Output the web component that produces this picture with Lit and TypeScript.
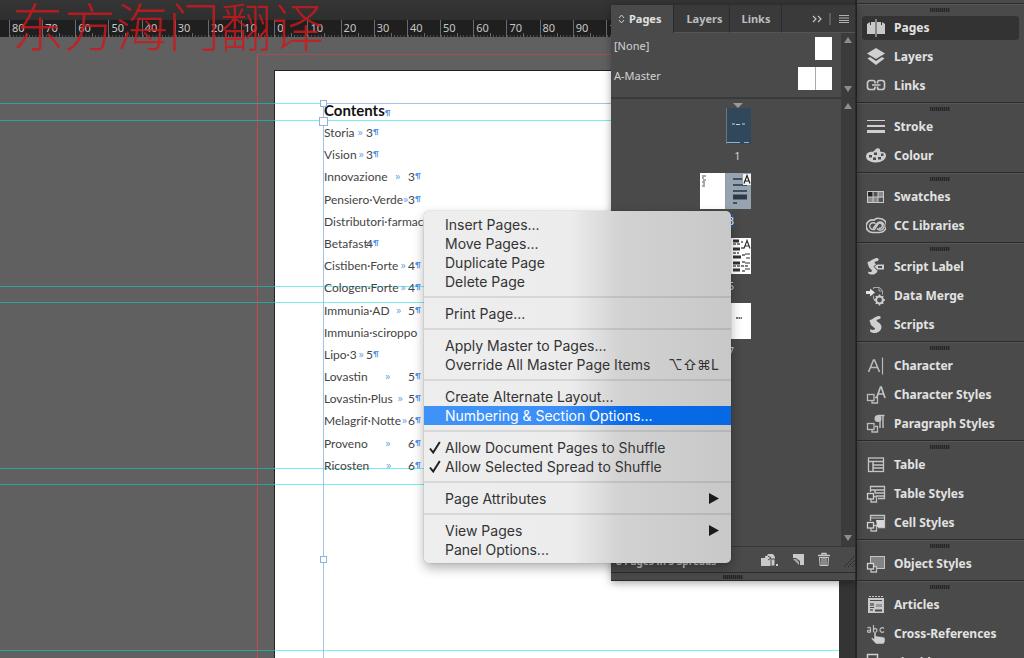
import { LitElement, html, css } from "lit";
import { customElement, property } from "lit/decorators.js";
import { classMap } from "lit/directives/class-map.js";

/* ---------- icons ---------- */

const icons: Record<string, unknown> = {
  pages: html`<svg viewBox="0 0 20 20"><path d="M1 16V6l3-2v3h1V4h4v12zM11 16V4h4v3h1V4l3 2v10z" fill="#c9c9c9"/><path d="M10 1v18" stroke="#d6d6d6"/></svg>`,
  layers: html`<svg viewBox="0 0 20 20"><path d="M10 1l9 5.500-9 5.500-9-5.500z" fill="#d0d0d0"/><path d="M1.500 11.500L4 10l6 4 6-4 2.500 1.500L10 18z" fill="#d0d0d0"/></svg>`,
  links: html`<svg viewBox="0 0 20 20"><path d="M9 7.500V6.500a2 2 0 0 0-2-2H4a2.500 2.500 0 0 0-2.500 2.500v4A2.500 2.500 0 0 0 4 13.500h3a2 2 0 0 0 2-2v-1M11.500 7.500V6.500a2 2 0 0 1 2-2H16a2.500 2.500 0 0 1 2.500 2.500v4a2.500 2.500 0 0 1-2.500 2.500h-2.500a2 2 0 0 1-2-2v-1M6 9h8.500" fill="none" stroke="#c9c9c9" stroke-width="1.700"/></svg>`,
  stroke: html`<svg viewBox="0 0 20 20"><path d="M1 3.500h18" stroke="#cfcfcf"/><path d="M1 9h18" stroke="#cfcfcf" stroke-width="2"/><path d="M1 14.500h18" stroke="#cfcfcf" stroke-width="3"/></svg>`,
  colour: html`<svg viewBox="0 0 20 20"><path d="M9 4c1.500-2.600 5.500-2 5 .3-.2 1.200.6 1.700 2 1.700 2.200 0 4 1 4 3.500 0 4-4.500 7-10 7s-10-2.500-10-6c0-2.200 1.500-4 4-4.500C6 5.700 7.500 6 9 4z" fill="#cfcfcf"/><g fill="#4a4a4a"><rect x="3" y="9" width="3" height="2.500"/><rect x="7" y="11.500" width="3" height="2.500"/><rect x="12" y="11" width="3" height="2.500"/><rect x="15" y="7.500" width="2.500" height="2.500"/><rect x="8" y="6.500" width="3" height="2.500"/></g></svg>`,
  swatches: html`<svg viewBox="0 0 20 20"><rect x="1.500" y="4.500" width="16" height="11" fill="#8a8a8a" stroke="#c9c9c9"/><path d="M2 5h5v5H2z" fill="#222"/><path d="M7 5h5v5H7zM12 10.500h5V15h-5z" fill="#555"/><path d="M7 4v12M12 4v12M1 10h17" stroke="#c9c9c9"/></svg>`,
  cc: html`<svg viewBox="0 0 20 20"><path d="M7 16.500a6.300 6.300 0 1 1 1-12.400 5.500 5.500 0 0 1 5.500-1.600A7 7 0 0 1 13.500 16.500z" fill="none" stroke="#c9c9c9" stroke-width="1.600"/><path d="M11 12.500a4 4 0 1 0 0-5L7 12.500M13 12a2.500 2.500 0 1 0-1-4L8.500 13.500H7a3.400 3.400 0 1 1 2.500-5.800" fill="none" stroke="#c9c9c9" stroke-width="1.400"/></svg>`,
  scriptLabel: html`<svg viewBox="0 0 20 20"><path d="M9 1.500c2-1 4.500 0 3.500 1.800C11.800 4.500 9 4 8.500 5.500c0 1.200 2.500 1.500 3 3.500v5c-1 3-4.500 4-7 3.500-2-.3-3-1.500-2-3 1 1 3 .5 3.500-.5.400-1.500-3-2.500-3.500-5C2 7 1 6 2 4.500 3 5.500 5 3 9 1.500z" fill="#cfcfcf"/><path d="M8 9.500l3-2.500h7.500v6H11z" fill="#cfcfcf" stroke="#4a4a4a"/><path d="M12 10h4" stroke="#4a4a4a" stroke-width="2"/></svg>`,
  dataMerge: html`<svg viewBox="0 0 20 20"><path d="M7.500 3V1.500h6l3 3v4M7.500 9.500V13h2M13 2v3h3" fill="none" stroke="#a9a9a9"/><path d="M0 5h4V2.500L9 6.500 4 10.500V8H0z" fill="#e2e2e2"/><circle cx="13.500" cy="14" r="3.400" fill="none" stroke="#cfcfcf" stroke-width="2"/><path d="M13.500 8.500v2M13.500 17.500v2M8 14h2M17 14h2M9.800 10.300l1.200 1.200M16 16.500l1.200 1.200M9.800 17.700l1.200-1.200M16 11.500l1.200-1.200" stroke="#cfcfcf" stroke-width="1.600"/></svg>`,
  scripts: html`<svg viewBox="0 0 20 20"><path d="M11 1.500c2-1 4.500 0 3.500 1.800-.7 1.200-3.500.7-4 2.200 0 1.500 5 2.500 5 6.500 0 4-4.500 6.500-8 6-2.500-.4-4.500-2-3-3.800 1 1 4 1 4.500-.2.500-1.500-4-2.500-4.500-5.500C4.300 7 3 6.200 4 4.800 5 5.600 7 2.800 11 1.500z" fill="#d0d0d0"/></svg>`,
  character: html`<svg viewBox="0 0 20 20"><path d="M2.500 16L7.500 4h1l5 12M4.500 11.500h7" fill="none" stroke="#b9b9b9" stroke-width="1.600"/><path d="M16.500 1.500v17" stroke="#b9b9b9" stroke-width="1.200"/></svg>`,
  charStyles: html`<svg viewBox="0 0 20 20"><path d="M10.500 13L14.500 2h.8L19 13M12 9h6" fill="none" stroke="#c4c4c4" stroke-width="1.700"/><path d="M6 15v3h5.500v-5.500H9" fill="none" stroke="#bdbdbd" stroke-width="1.300"/><rect x="1.500" y="9.500" width="6.500" height="6" fill="none" stroke="#bdbdbd" stroke-width="1.300"/></svg>`,
  paraStyles: html`<svg viewBox="0 0 20 20"><path d="M12 1.500h6.500M14 1.500V14M17 1.500V14" stroke="#c4c4c4" stroke-width="1.400"/><circle cx="12" cy="4.500" r="3.500" fill="#c4c4c4"/><path d="M6 15v3h5.500v-5.500H9" fill="none" stroke="#bdbdbd" stroke-width="1.300"/><rect x="1.500" y="9.500" width="6.500" height="6" fill="none" stroke="#bdbdbd" stroke-width="1.300"/></svg>`,
  table: html`<svg viewBox="0 0 20 20"><rect x="2.500" y="3" width="15" height="13.500" fill="none" stroke="#c4c4c4" stroke-width="1.300"/><path d="M3 6.500h14M7 7v9.500M7 10h10M7 13h10" stroke="#c4c4c4" stroke-width="1.500"/></svg>`,
  tableStyles: html`<svg viewBox="0 0 20 20"><path d="M4.500 8V2.500h14v12H12" fill="none" stroke="#c4c4c4" stroke-width="1.300"/><path d="M5 6h13M9 9h9M10 12h8M9 6v3" stroke="#c4c4c4" stroke-width="1.500"/><path d="M5 15v3h5.500v-5.500H8" fill="none" stroke="#bdbdbd" stroke-width="1.300"/><rect x="1.500" y="9.500" width="6" height="5.500" fill="#4a4a4a" stroke="#d2d2d2" stroke-width="1.300"/></svg>`,
  cellStyles: html`<svg viewBox="0 0 20 20"><path d="M4.500 8V2.500h14v12H12" fill="none" stroke="#c4c4c4" stroke-width="1.300"/><path d="M5 5h13" stroke="#c4c4c4"/><path d="M10 7h8v7h-7z" fill="#d8d8d8"/><path d="M5 15v3h5.500v-5.500H8" fill="none" stroke="#bdbdbd" stroke-width="1.300"/><rect x="1.500" y="9.500" width="6" height="5.500" fill="#4a4a4a" stroke="#d2d2d2" stroke-width="1.300"/></svg>`,
  objectStyles: html`<svg viewBox="0 0 20 20"><rect x="4.500" y="2.500" width="14" height="12" fill="#838383" stroke="#c4c4c4"/><path d="M5 15v3h5.500v-5.500H8" fill="#4a4a4a" stroke="#bdbdbd" stroke-width="1.300"/><rect x="1.500" y="9.500" width="6" height="5.500" fill="#4a4a4a" stroke="#d2d2d2" stroke-width="1.300"/></svg>`,
  articles: html`<svg viewBox="0 0 20 20"><path d="M3 1.500h14" stroke="#c4c4c4" stroke-dasharray="2 1"/><rect x="2" y="3" width="16" height="15" fill="#c9c9c9"/><path d="M4 5.500h12M4 12.500h4" stroke="#4a4a4a" fill="none"/><path d="M10 9h6v3h-6z" fill="#999"/><path d="M9 14.500h7v2H9z" fill="#4a4a4a"/><path d="M4 8h4v3H4zM4 14h3v2H4z" fill="#777"/></svg>`,
  crossRef: html`<svg viewBox="0 0 20 20"><path d="M1.500 4c1-1 3-1 3 .5V8.500M4.500 6C2 6 1.500 6.500 1.500 7.300c0 1.500 2.500 1.500 3 0M7.500 1v7.500M7.500 5.500c1-1.500 3.500-1 3.500 1s-2.500 2.500-3.500 1M18 4.500c-1.500-1.500-4-.7-4 1.500s2.500 3 4 1.500" fill="none" stroke="#bdbdbd" stroke-width="1.200"/><path d="M8 8c1-.5 2 0 2 1v3l7 1c1.500.2 2 1 2 2v2.500L17.500 20H10l-4.500-5c-.5-1 .5-1.700 1.500-1l1 1z" fill="#d0d0d0" stroke="#4a4a4a" stroke-width=".5"/></svg>`,
  liquid: html`<svg viewBox="0 0 20 20"><path d="M9 14.500H1.500V1.500h10V6" fill="none" stroke="#d0d0d0" stroke-width="1.500"/><rect x="5" y="5" width="8" height="8" fill="#888"/><rect x="9" y="7" width="9" height="10" fill="none" stroke="#999"/></svg>`,
};

const dockGroups: [string, string][][] = [
  [["pages", "Pages"], ["layers", "Layers"], ["links", "Links"]],
  [["stroke", "Stroke"], ["colour", "Colour"]],
  [["swatches", "Swatches"], ["cc", "CC Libraries"]],
  [["scriptLabel", "Script Label"], ["dataMerge", "Data Merge"], ["scripts", "Scripts"]],
  [["character", "Character"], ["charStyles", "Character Styles"], ["paraStyles", "Paragraph Styles"]],
  [["table", "Table"], ["tableStyles", "Table Styles"], ["cellStyles", "Cell Styles"]],
  [["objectStyles", "Object Styles"]],
  [["articles", "Articles"], ["crossRef", "Cross-References"], ["liquid", "Liquid Layout"]],
];

/* ---------- dock ---------- */

@customElement("panel-dock")
class PanelDock extends LitElement {
  @property() active = "pages";

  static styles = css`
    :host {
      display: block;
      box-sizing: border-box;
      padding-top: 3px;
      border-left: 2px solid #262626;
      background: #4a4a4a;
      overflow: hidden;
      font-family: "Noto Sans", "Open Sans", sans-serif;
    }
    .group {
      display: grid;
      grid-auto-rows: 28px;
      row-gap: 1px;
      padding: 10px 4px 2px;
      border-top: 1px solid #2b2b2b;
      box-shadow: inset 0 1px #575757;
      background: repeating-linear-gradient(90deg, #262626 0 1px, #3c3c3c 1px 2px) 73px 4px / 20px 4px no-repeat;
    }
    .row {
      display: flex;
      align-items: center;
      gap: 8px;
      margin: 0;
      padding: 0 4px;
      border: 0 solid transparent;
      border-width: 2px 1px;
      border-radius: 5px;
      background: none;
      background-clip: padding-box;
      color: #e2e2e2;
      font: 700 12px/20px "Noto Sans", "Open Sans", sans-serif;
      text-align: left;
      white-space: nowrap;
    }
    .row.on {
      background-color: #333;
    }
    svg {
      flex: none;
      width: 20px;
      height: 20px;
    }
  `;

  render() {
    return dockGroups.map(
      (group) => html`<div class="group">
        ${group.map(
          ([id, label]) => html`<button class=${classMap({ row: true, on: id === this.active })} @click=${() => (this.active = id)}>
            ${icons[id]}<span>${label}</span>
          </button>`
        )}
      </div>`
    );
  }
}

/* ---------- pages panel ---------- */

@customElement("pages-panel")
class PagesPanel extends LitElement {
  static styles = css`
    :host {
      display: flex;
      flex-direction: column;
      box-sizing: border-box;
      border: 1px solid #2a2a2a;
      border-width: 0 1px 1px 0;
      background: #4a4a4a;
      color: #d2d2d2;
      font: 11px/16px "Noto Sans", "Open Sans", sans-serif;
      box-shadow: 0 2px 8px rgba(0, 0, 0, 0.35);
    }
    button {
      margin: 0;
      padding: 0;
      border: 0;
      background: none;
      color: inherit;
      font: inherit;
    }
    .tabs {
      display: flex;
      align-items: stretch;
      height: 28px;
      background: #3a3a3a;
    }
    .tab {
      min-width: 52px;
      padding: 0 6px 0 12px;
      border-right: 1px solid #2c2c2c;
      color: #bdbdbd;
      font-weight: 700;
      text-align: left;
    }
    .tab.on {
      display: flex;
      align-items: center;
      gap: 4px;
      padding: 0 12px 0 7px;
      background: #4a4a4a;
      color: #e2e2e2;
    }
    .tab.on svg {
      width: 7px;
      height: 10px;
    }
    .tools {
      display: flex;
      flex: 1;
      align-items: center;
      justify-content: flex-end;
      gap: 7px;
      padding-right: 6px;
      border-bottom: 1px solid #555;
    }
    .tab:not(.on) {
      border-bottom: 1px solid #555;
    }
    .pane {
      display: grid;
      grid-template-columns: 1fr 14px;
    }
    .masters {
      border-bottom: 2px solid #3a3a3a;
    }
    .master {
      display: flex;
      align-items: flex-start;
      justify-content: space-between;
      height: 23px;
      margin-top: 7px;
      padding: 0 9px 0 3px;
      line-height: 18px;
    }
    .master:first-child {
      margin-top: 4px;
    }
    .master:last-child {
      margin-bottom: 7px;
    }
    .sheets {
      display: flex;
    }
    .sheet {
      width: 17px;
      height: 23px;
      background: #fff;
    }
    .sheet + .sheet {
      box-shadow: inset 1px 0 #aaa;
    }
    .scroll {
      display: flex;
      flex-direction: column;
      justify-content: space-between;
      align-items: center;
      padding: 4px 0 5px;
      background: #3b3b3b;
    }
    .scroll svg {
      width: 8px;
      height: 6px;
    }
    .spreads {
      flex: 1;
      min-height: 0;
    }
    .list {
      display: flex;
      flex-direction: column;
      padding-top: 4px;
    }
    .marker {
      align-self: center;
      width: 10px;
      height: 5px;
      margin-left: 24px;
    }
    .spread {
      display: grid;
      grid-template: 36px 29px / 1fr 1fr;
    }
    .thumb {
      width: 25px;
      height: 36px;
    }
    .thumb.left {
      justify-self: end;
      border-right: 1px solid #999;
      background: #fff;
    }
    .thumb.right {
      grid-column: 2;
    }
    .num {
      grid-column: 1 / 3;
      justify-self: center;
      align-self: start;
      margin-top: 5px;
      line-height: 14px;
    }
    .num.single {
      grid-column: 2;
      justify-self: start;
      width: 23px;
      text-align: center;
    }
    .num.sel {
      background: #30598c;
      color: #fff;
    }
    .foot {
      display: flex;
      align-items: center;
      gap: 14px;
      height: 25px;
      padding-left: 5px;
      border-top: 1px solid #383838;
      font-weight: 700;
    }
    .count {
      flex: 1;
      padding-top: 3px;
      color: #c4c4c4;
      font-size: 10px;
      white-space: nowrap;
    }
    .foot svg {
      display: block;
      height: 15px;
    }
    .grip {
      height: 7px;
      border-top: 1px solid #2c2c2c;
      background: repeating-linear-gradient(90deg, #222 0 1px, #3c3c3c 1px 2px) center / 20px 4px no-repeat;
    }
  `;

  private scroll() {
    return html`<div class="scroll">
      <svg viewBox="0 0 8 6"><path d="M4 0l4 6H0z" fill="#8d8d8d"/></svg>
      <svg viewBox="0 0 8 6"><path d="M4 6l4-6H0z" fill="#8d8d8d"/></svg>
    </div>`;
  }

  render() {
    return html`
      <div class="tabs">
        <button class="tab on">
          <svg viewBox="0 0 7 10"><path d="M1 4l2.500-3L6 4M1 6l2.500 3L6 6" fill="none" stroke="#ccc"/></svg>Pages
        </button>
        <button class="tab">Layers</button>
        <button class="tab">Links</button>
        <div class="tools">
          <svg width="10" height="8" viewBox="0 0 10 8"><path d="M1 1l3 3-3 3M6 1l3 3-3 3" fill="none" stroke="#c4c4c4" stroke-width="1.200"/></svg>
          <svg width="3" height="12" viewBox="0 0 3 12"><rect width="2" height="12" fill="#5c5c5c"/></svg>
          <svg width="10" height="8" viewBox="0 0 10 8"><path d="M0 .5h10M0 3h10M0 5.500h10M0 7.500h10" stroke="#b0b0b0"/></svg>
        </div>
      </div>
      <div class="pane masters">
        <div>
          <div class="master"><span>[None]</span><span class="sheets"><i class="sheet"></i></span></div>
          <div class="master"><span>A-Master</span><span class="sheets"><i class="sheet"></i><i class="sheet"></i></span></div>
        </div>
        ${this.scroll()}
      </div>
      <div class="pane spreads">
        <div class="list">
          <svg class="marker" viewBox="0 0 10 5"><path d="M0 0h10L5 5z" fill="#999"/></svg>
          <div class="spread">
            <svg class="thumb right" viewBox="0 0 25 36"><rect width="25" height="36" fill="#30475c"/><path d="M0 0v36" stroke="#9aa" stroke-width="1"/><path d="M6 16h3M10 16.500h4M16 16h3" stroke="#c6d2da"/><path d="M1 34.500h13M18 34.500h5" stroke="#9db0bf"/></svg>
            <span class="num single">1</span>
          </div>
          <div class="spread">
            <svg class="thumb left" viewBox="0 0 25 36"><path d="M2 3h4M2 5h2M3 7h3M2 9h3M3 11h2M2 13h3" stroke="#555" stroke-width="1.200"/></svg>
            <svg class="thumb right" viewBox="0 0 25 36"><rect width="25" height="36" fill="#98a3b0"/><path d="M7 6h9M7 12h14M7 18h14M7 30h4" stroke="#3f5062" stroke-width="2"/><path d="M7 24h14" stroke="#2e3a4c" stroke-width="5"/><rect x="17" y="1" width="8" height="11" fill="#f4f4f4"/><path d="M18 10.500l3-8 3 8M19 8h4" fill="none" stroke="#222" stroke-width="1.200"/></svg>
            <span class="num sel">2-3</span>
          </div>
          <div class="spread">
            <svg class="thumb left" viewBox="0 0 25 36"></svg>
            <svg class="thumb right" viewBox="0 0 25 36"><rect width="25" height="36" fill="#fff"/><path d="M7 3h6M7 11h7M7 19h8M7 25h7M7 32h7" stroke="#333" stroke-width="3"/><path d="M7 6h8M15 4h2M15 10h3M7 15h6M16 17h3M7 28h15M16 24h3M16 33h3" stroke="#555" stroke-width="1.500" stroke-dasharray="3 1"/><path d="M18 10.500l3-8 3 8M19 8h4M19 16h5M20 20h4M19 25h5M19 31h5" fill="none" stroke="#333" stroke-width="1.200"/></svg>
            <span class="num">4-5</span>
          </div>
          <div class="spread">
            <svg class="thumb left" viewBox="0 0 25 36"></svg>
            <svg class="thumb right" viewBox="0 0 25 36"><rect width="25" height="36" fill="#fff"/><path d="M4 15h6" stroke="#777" stroke-width="2" stroke-dasharray="2 .5" transform="translate(6 0)"/></svg>
            <span class="num">6-7</span>
          </div>
        </div>
        ${this.scroll()}
      </div>
      <div class="foot">
        <span class="count">8 Pages in 5 Spreads</span>
        <button aria-label="Edit page size"><svg width="17" viewBox="0 0 17 15"><path d="M0 6h4V4h2l1-2h5l2 3v2h-4v7H0z" fill="#c9c9c9"/><path d="M7 4l3 2-3 2M10 7h4v7h-4z" stroke="#4a4a4a" fill="#c9c9c9"/><path d="M15 12h2v2h-2z" fill="#c9c9c9"/></svg></button>
        <button aria-label="New page"><svg width="12" viewBox="0 0 12 15"><path d="M1 2h11v11H8V9L4 6H1z" fill="#c9c9c9"/><path d="M1 7l3 0 3 3v3z" fill="#aaa"/></svg></button>
        <button aria-label="Delete page"><svg width="12" viewBox="0 0 12 15"><path d="M0 3.500h12M4 3V1.500h4V3" fill="none" stroke="#c9c9c9" stroke-width="1.300"/><path d="M1.500 5.500h9l-.5 8H2z" fill="none" stroke="#c9c9c9"/><path d="M4 6v7M6 6v7M8 6v7" stroke="#c9c9c9"/></svg></button>
        <svg width="11" viewBox="0 0 11 15"><path d="M0 15L11 4M4 15l7-7M8 15l3-3" stroke="#222" stroke-dasharray="1.500 1"/></svg>
      </div>
      <div class="grip"></div>
    `;
  }
}

/* ---------- context menu ---------- */

interface Entry {
  label: string;
  keys?: string;
  checked?: boolean;
  sub?: boolean;
  hot?: boolean;
}

const menu: Entry[][] = [
  [{ label: "Insert Pages..." }, { label: "Move Pages..." }, { label: "Duplicate Page" }, { label: "Delete Page" }],
  [{ label: "Print Page..." }],
  [{ label: "Apply Master to Pages..." }, { label: "Override All Master Page Items", keys: "⌥⇧⌘L" }],
  [{ label: "Create Alternate Layout..." }, { label: "Numbering & Section Options...", hot: true }],
  [{ label: "Allow Document Pages to Shuffle", checked: true }, { label: "Allow Selected Spread to Shuffle", checked: true }],
  [{ label: "Page Attributes", sub: true }],
  [{ label: "View Pages", sub: true }, { label: "Panel Options..." }],
];

@customElement("context-menu")
class ContextMenu extends LitElement {
  static styles = css`
    :host {
      display: block;
      box-sizing: border-box;
      padding: 4px 0;
      border-radius: 5px;
      background: linear-gradient(90deg, #eee 0, #ececec 48%, #d2d2d2 64%, #c8c8c8 100%);
      box-shadow: 0 0 1px rgba(0, 0, 0, 0.5), 0 5px 12px rgba(0, 0, 0, 0.3);
    }
    .part + .part {
      margin-top: 5px;
      padding-top: 6px;
      border-top: 2px solid rgba(0, 0, 0, 0.09);
    }
    .item {
      display: grid;
      grid-template-columns: 21px 1fr auto;
      align-items: center;
      width: 100%;
      height: 19px;
      margin: 0;
      padding: 0 12px 0 0;
      border: 0;
      background: none;
      color: #333;
      font: 14px/19px Inter, Roboto, sans-serif;
      text-align: left;
      white-space: nowrap;
    }
    .item.hot {
      background: linear-gradient(90deg, #3f93f8 0, #3c8ff6 45%, #0a6be8 65%, #0768e4 100%);
      color: #fff;
    }
    .tick {
      justify-self: center;
      width: 12px;
      height: 13px;
    }
    .keys {
      font-family: Inter, "DejaVu Sans", sans-serif;
    }
    .sub {
      width: 10px;
      height: 11px;
    }
  `;

  render() {
    return menu.map(
      (part) => html`<div class="part">
        ${part.map(
          (e) => html`<button class=${classMap({ item: true, hot: !!e.hot })}>
            ${e.checked
              ? html`<svg class="tick" viewBox="0 0 12 13"><path d="M1 7.500l3.200 4L10.800 1" fill="none" stroke="#222" stroke-width="2"/></svg>`
              : html`<span></span>`}
            <span>${e.label}</span>
            ${e.keys ? html`<span class="keys">${e.keys}</span>` : ""}
            ${e.sub ? html`<svg class="sub" viewBox="0 0 10 11"><path d="M0 0l10 5.500L0 11z" fill="#1a1a1a"/></svg>` : ""}
          </button>`
        )}
      </div>`
    );
  }
}

/* ---------- workspace ---------- */

/* name, page number, number of tab stops before it */
const contents: [string, string, number][] = [
  ["Storia", "3", 1],
  ["Vision", "3", 1],
  ["Innovazione", "3", 2],
  ["Pensiero·Verde", "3", 2],
  ["Distributori·farmace", "", 0],
  ["Betafast", "4", 1],
  ["Cistiben·Forte", "4", 2],
  ["Cologen·Forte", "4", 2],
  ["Immunia·AD", "5", 2],
  ["Immunia·sciroppo", "", 0],
  ["Lipo·3", "5", 1],
  ["Lovastin", "5", 2],
  ["Lovastin·Plus", "5", 2],
  ["Melagrif·Notte", "6", 2],
  ["Proveno", "6", 2],
  ["Ricosten", "6", 2],
];

const rulerMarks = Array.from({ length: 25 }, (_, i) => Math.abs(i - 8) * 10);
const guides = [66, 83, 249, 265, 431, 447, 613];

@customElement("app-root")
class AppRoot extends LitElement {
  static styles = css`
    :host {
      position: relative;
      display: grid;
      grid-template-columns: 1fr 169px;
      height: 100vh;
      overflow: hidden;
      background: #343434;
      font-family: "Open Sans", "Noto Sans", sans-serif;
    }
    .work {
      display: grid;
      grid-template-rows: 20px 17px 1fr;
      min-width: 0;
      min-height: 0;
    }
    .bar {
      background: linear-gradient(#353535, #2f2f2f);
    }
    .ruler {
      overflow: hidden;
      background: #1f1f1f;
    }
    .marks {
      display: grid;
      grid-template-columns: repeat(25, 1fr);
      width: 829px;
      height: 17px;
      margin-left: 9px;
    }
    .mark {
      padding-left: 2px;
      border-left: 1px solid #6a6a6a;
      background:
        linear-gradient(90deg, transparent 50%, #6a6a6a 50%, #6a6a6a 53%, transparent 53%) bottom / 100% 4px no-repeat,
        linear-gradient(90deg, #5a5a5a 1px, transparent 1px) bottom left / 10% 2px repeat-x;
      color: #c6c6c6;
      font: 11px/16px "Noto Sans", sans-serif;
    }
    .canvas {
      position: relative;
      overflow: hidden;
      margin-right: 16px;
      background: #606060;
    }
    .bleed {
      position: absolute;
      left: 257px;
      top: 17px;
      right: -20px;
      bottom: -20px;
      border: 1px solid #a04f54;
      border-left-color: #c9474c;
    }
    .page {
      position: absolute;
      left: 274px;
      top: 33px;
      right: 0;
      bottom: 0;
      border: 1px solid #222;
      border-width: 1px 0 0 1px;
      background: #fff;
    }
    .guide {
      position: absolute;
      left: 0;
      right: 0;
      height: 1px;
      background: linear-gradient(90deg, #2aa597 275px, #79eeee 275px);
    }
    .frame {
      position: absolute;
      left: 323px;
      top: 66px;
      right: 0;
      bottom: 0;
      border: 1px solid #a0c4ea;
      border-width: 1px 0 0 1px;
      color: #444;
    }
    .handle {
      position: absolute;
      left: -4px;
      width: 5px;
      height: 5px;
      border: 1px solid #8fb2e2;
      background: #fff;
    }
    .handle.top {
      top: -4px;
    }
    .handle.port {
      top: 13px;
      left: -5px;
      width: 7px;
      height: 7px;
    }
    .handle.mid {
      top: 452px;
    }
    h1 {
      height: 18px;
      margin: 0;
      color: #111;
      font: 700 15px/13px Lato, "Open Sans", sans-serif;
    }
    ol {
      display: grid;
      grid-auto-rows: 1fr;
      height: 355px;
      margin: 0;
      padding: 0;
      list-style: none;
      font: 400 12px/21px Lato, "Open Sans", sans-serif;
    }
    li {
      display: flex;
      white-space: nowrap;
    }
    .lead {
      display: flex;
    }
    .lead.t1 {
      width: 42px;
    }
    .lead.t2 {
      width: 84px;
    }
    .tab {
      flex: 1;
      color: #6aa3ea;
      font-family: "Open Sans", sans-serif;
      font-size: 10px;
      text-align: center;
    }
    .sign {
      color: #4f93ea;
      font-weight: 700;
      font-size: 8px;
    }
    .stamp {
      position: absolute;
      left: 12px;
      top: 0;
      margin: 0;
      color: rgba(205, 24, 28, 0.82);
      font: 300 52px/50px "Noto Sans CJK SC", sans-serif;
      white-space: nowrap;
      pointer-events: none;
    }
    pages-panel {
      position: absolute;
      top: 5px;
      right: 168px;
      width: 245px;
      height: 576px;
    }
    context-menu {
      position: absolute;
      left: 424px;
      top: 211px;
      width: 307px;
    }
  `;

  render() {
    return html`
      <main class="work">
        <div class="bar"></div>
        <div class="ruler"><div class="marks">${rulerMarks.map((m) => html`<span class="mark">${m}</span>`)}</div></div>
        <div class="canvas">
          <div class="bleed"></div>
          <div class="page"></div>
          ${guides.map((y) => html`<div class="guide" style="top:${y}px"></div>`)}
          <section class="frame">
            <h1>Contents<span class="sign">¶</span></h1>
            <ol>
              ${contents.map(
                ([name, num, stops]) => html`<li>
                  <span class="lead t${stops}"><span>${name}</span>${stops ? html`<span class="tab">»</span>` : ""}</span>
                  ${num ? html`<span>${num}</span><span class="sign">¶</span>` : ""}
                </li>`
              )}
            </ol>
            <i class="handle top"></i><i class="handle port"></i><i class="handle mid"></i>
          </section>
        </div>
      </main>
      <panel-dock></panel-dock>
      <p class="stamp">东方海门翻译</p>
      <pages-panel></pages-panel>
      <context-menu></context-menu>
    `;
  }
}
